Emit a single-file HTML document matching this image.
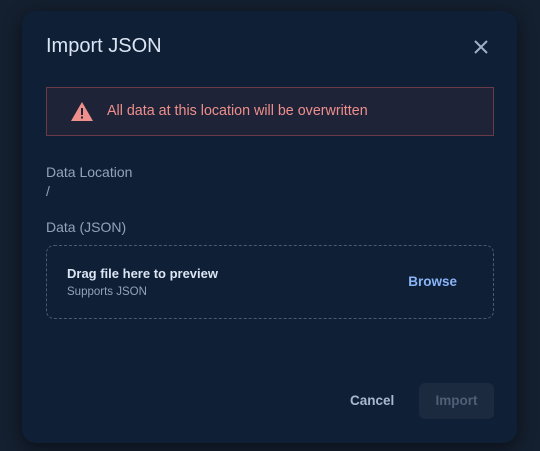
<!DOCTYPE html>
<html><head><meta charset="utf-8"><style>
*{box-sizing:border-box;margin:0;padding:0}
body{width:540px;height:451px;background:#141f2f;font-family:"Liberation Sans",sans-serif;position:relative;overflow:hidden}
.dlg{position:absolute;left:22px;top:11px;width:495px;height:432px;background:#0f1f36;border-radius:14px;box-shadow:0 4px 16px rgba(0,0,0,.5)}
.t{position:absolute;left:46px;top:35px;font-size:20px;color:#dbe5f3}
.x{position:absolute;left:472px;top:38px}
.ban{position:absolute;left:46px;top:87px;width:448px;height:49px;background:#1f2337;border:1px solid #6a3a48}
.ban svg{position:absolute;left:24px;top:14px}
.ban span{position:absolute;left:60px;top:15px;font-size:14.3px;color:#ee8f8c}
.l{position:absolute;left:46px;font-size:14px;color:#93a3b8}
.dz{position:absolute;left:46px;top:245px;width:448px;height:74px;border:1px dashed #4a5a70;border-radius:8px}
.d1{position:absolute;left:20px;top:20px;font-size:13px;font-weight:bold;color:#dbe5f3}
.d2{position:absolute;left:20px;top:40px;font-size:11.5px;color:#93a3b8}
.br{position:absolute;right:36px;top:28px;font-size:13.5px;font-weight:bold;color:#8ab4f8}
.c{position:absolute;left:350px;top:393px;font-size:13.5px;font-weight:bold;color:#a9b8cc}
.imp{position:absolute;left:419px;top:383px;width:75px;height:36px;border-radius:6px;background:#1c2a40;color:#4f5f75;font-size:13.5px;font-weight:bold;text-align:center;line-height:36px}
</style></head><body>
<div class="dlg"></div>
<div class="t">Import JSON</div>
<svg class="x" width="18" height="18" viewBox="0 0 18 18"><path d="M3 3L15 15M15 3L3 15" stroke="#9fb0c4" stroke-width="2"/></svg>
<div class="ban"><svg width="22" height="19" viewBox="0 0 22 19"><path d="M11 0L22 19H0Z" fill="#ee8f8c"/><rect x="10" y="6" width="2" height="7" fill="#1f2337"/><rect x="10" y="14.5" width="2" height="2" fill="#1f2337"/></svg><span>All data at this location will be overwritten</span></div>
<div class="l" style="top:164px">Data Location</div>
<div class="l" style="top:183px">/</div>
<div class="l" style="top:219px">Data (JSON)</div>
<div class="dz"><div class="d1">Drag file here to preview</div><div class="d2">Supports JSON</div><div class="br">Browse</div></div>
<div class="c">Cancel</div>
<div class="imp">Import</div>
</body></html>
